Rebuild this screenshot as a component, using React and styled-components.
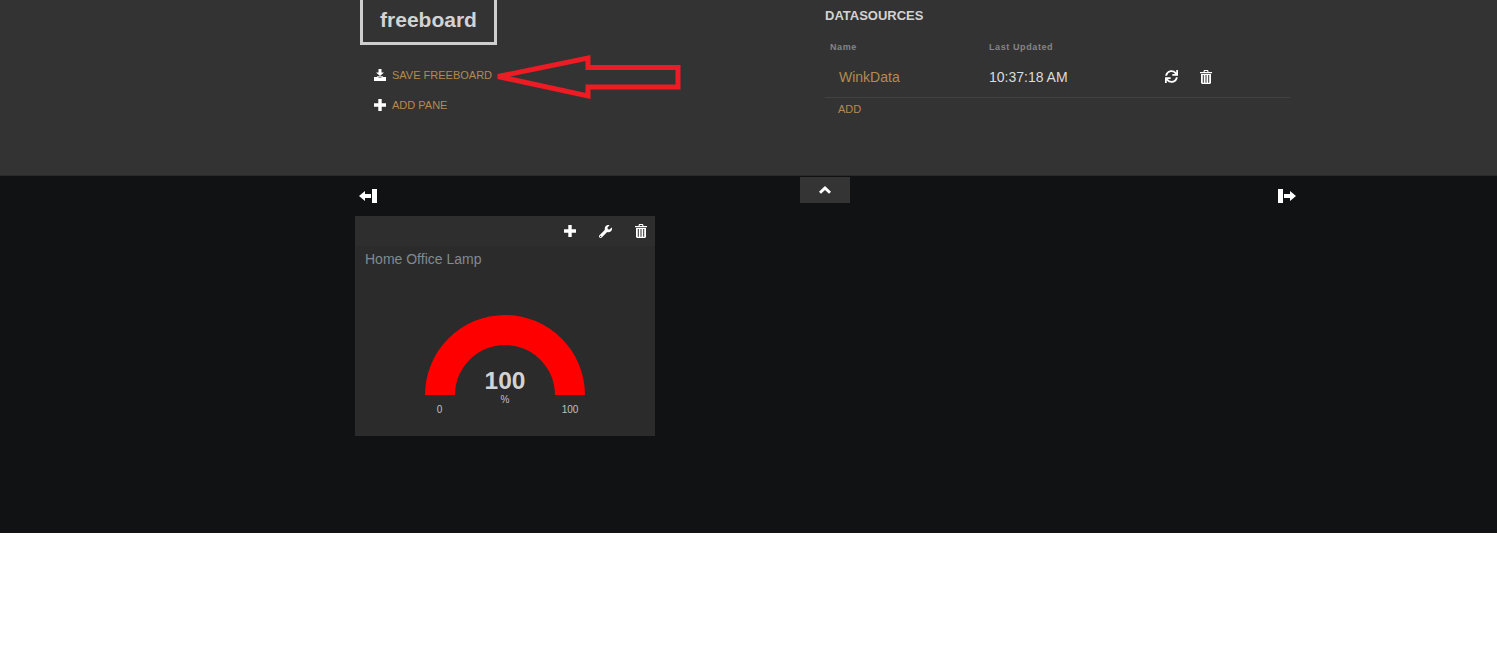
import styled, { createGlobalStyle } from "styled-components";
import { FaSync, FaWrench } from "react-icons/fa";

const GlobalStyle = createGlobalStyle`
  html, body {
    margin: 0;
    padding: 0;
    background: #fff;
    font-family: "Liberation Sans", Arial, sans-serif;
  }
`;

const Page = styled.div`
  width: 1497px;
  height: 533px;
  background: #101214;
  position: relative;
  overflow: hidden;
`;

const Header = styled.header`
  height: 176px;
  box-sizing: border-box;
  padding-left: 355px;
  background: #333333;
  border-bottom: 1px solid #292929;
  display: flex;
`;

const LeftColumn = styled.div`
  width: 470px;
`;

const Logo = styled.h1`
  margin: 0 0 0 5px;
  width: 137px;
  height: 45px;
  box-sizing: border-box;
  border: 3px solid #cfcfcf;
  border-top: none;
  padding-top: 8px;
  text-align: center;
  color: #d3d3d3;
  font-size: 21px;
  line-height: 24px;
  font-weight: bold;
`;

const Actions = styled.ul`
  list-style: none;
  margin: 15px 0 0 19px;
  padding: 0;
`;

const Action = styled.li`
  height: 30px;
  display: flex;
  align-items: center;
  gap: 6px;
  color: #b58a4f;
  font-size: 11px;
  text-transform: uppercase;
`;

const IconSlot = styled.span`
  width: 12px;
  height: 12px;
  display: flex;
  color: #fff;
`;

const RightColumn = styled.div`
  width: 465px;
`;

const SectionTitle = styled.h2`
  margin: 8px 0 0;
  font-size: 13px;
  line-height: 15px;
  font-weight: bold;
  color: #d3d3d3;
  text-transform: uppercase;
`;

const ColumnHeads = styled.div`
  margin-top: 17px;
  height: 14px;
  display: grid;
  grid-template-columns: 159px 1fr;
  padding-left: 5px;
  font-size: 9px;
  line-height: 14px;
  font-weight: bold;
  letter-spacing: 0.6px;
  color: #858585;
`;

const SourceRow = styled.div`
  height: 41px;
  padding-top: 2px;
  display: grid;
  grid-template-columns: 150px 176px 35px 20px;
  align-items: center;
  padding-left: 14px;
  border-bottom: 1px solid #424242;
  font-size: 14px;
`;

const SourceName = styled.span`
  color: #b58a4f;
`;

const SourceTime = styled.span`
  color: #dcdcdc;
`;

const RowIcon = styled.span`
  display: flex;
  color: #fff;
`;

const AddLink = styled.div`
  margin: 5px 0 0 13px;
  font-size: 11px;
  line-height: 13px;
  color: #b58a4f;
`;

const Board = styled.main`
  width: 940px;
  margin-left: 355px;
`;

const Toolbar = styled.div`
  height: 40px;
  display: grid;
  grid-template-columns: 1fr 50px 1fr;
`;

const ToolbarSide = styled.div`
  display: flex;
  align-items: center;
  justify-content: ${(props) => (props.$end ? "flex-end" : "flex-start")};
  padding-left: ${(props) => (props.$end ? "0" : "4px")};
  margin-right: ${(props) => (props.$end ? "-1px" : "0")};
  color: #fff;
`;

const ToggleTab = styled.div`
  height: 26px;
  margin-top: 1px;
  background: #343434;
  display: flex;
  align-items: center;
  justify-content: center;
  color: #fff;
`;

const Pane = styled.section`
  width: 300px;
  height: 220px;
  background: #2b2b2b;
`;

const PaneHeader = styled.div`
  height: 30px;
  background: #2e2e2e;
  display: flex;
  align-items: center;
  justify-content: flex-end;
  gap: 23px;
  padding-right: 8px;
  color: #fff;
`;

const PaneTitle = styled.h3`
  margin: 5px 0 0 10px;
  font-size: 14px;
  line-height: 16px;
  font-weight: normal;
  color: #7f8a93;
`;

const Gauge = styled.svg`
  display: block;
  margin-top: 48px;
`;

const GaugeValue = styled.text`
  font-size: 24.500px;
  font-weight: bold;
  fill: #d3d3d3;
  text-anchor: middle;
`;

const GaugeLabel = styled.text`
  font-size: 10px;
  fill: #c0c0c0;
  text-anchor: middle;
`;

const ArrowNote = styled.svg`
  position: absolute;
  left: 490px;
  top: 50px;
`;

const DownloadIcon = () => (
  <svg width="12" height="12" viewBox="0 0 12 12" fill="currentColor">
    <path d="M4.500 0h3v3.500H10L6 7 2 3.500h2.500z" />
    <path d="M0 8h3.500L6 9l2.500-1H12v4H0z" />
    <rect x="3" y="7.300" width="6" height="1" />
  </svg>
);

const PlusIcon = () => (
  <svg width="12" height="12" viewBox="0 0 12 12" fill="currentColor">
    <path d="M4.300 0h3.400v4.300H12v3.400H7.700V12H4.300V7.700H0V4.300h4.300z" />
  </svg>
);

const TrashIcon = () => (
  <svg width="12" height="14" viewBox="0 0 12 14" fill="currentColor">
    <path d="M4 0h4l.6 2H12v1.200H0V2h3.400zM4.800 1l-.2 1h2.800l-.2-1z" />
    <path d="M1 4h10v9l-1 1H2l-1-1zM2.800 5v7.800h1V5zM5.500 5v7.800h1V5zM8.200 5v7.800h1V5z" fillRule="evenodd" />
  </svg>
);

const ChevronIcon = () => (
  <svg width="12" height="8" viewBox="0 0 12 8" fill="currentColor">
    <path d="M6 0l6 5.800-2 2L6 4 2 7.800l-2-2z" />
  </svg>
);

const CollapseLeftIcon = () => (
  <svg width="18" height="14" viewBox="0 0 18 14" fill="currentColor">
    <path d="M0 7l6-5v3h6v4H6v3z" />
    <rect x="13" y="0" width="5" height="14" />
  </svg>
);

const CollapseRightIcon = () => (
  <svg width="18" height="14" viewBox="0 0 18 14" fill="currentColor">
    <rect x="0" y="0" width="5" height="14" />
    <path d="M18 7l-6-5v3H6v4h6v3z" />
  </svg>
);

const App = () => (
  <>
    <GlobalStyle />
    <Page>
      <Header>
        <LeftColumn>
          <Logo>freeboard</Logo>
          <Actions>
            <Action>
              <IconSlot>
                <DownloadIcon />
              </IconSlot>
              Save Freeboard
            </Action>
            <Action>
              <IconSlot>
                <PlusIcon />
              </IconSlot>
              Add Pane
            </Action>
          </Actions>
        </LeftColumn>
        <RightColumn>
          <SectionTitle>Datasources</SectionTitle>
          <ColumnHeads>
            <span>Name</span>
            <span>Last Updated</span>
          </ColumnHeads>
          <SourceRow>
            <SourceName>WinkData</SourceName>
            <SourceTime>10:37:18 AM</SourceTime>
            <RowIcon>
              <FaSync size={13} />
            </RowIcon>
            <RowIcon>
              <TrashIcon />
            </RowIcon>
          </SourceRow>
          <AddLink>ADD</AddLink>
        </RightColumn>
      </Header>
      <Board>
        <Toolbar>
          <ToolbarSide>
            <CollapseLeftIcon />
          </ToolbarSide>
          <ToggleTab>
            <ChevronIcon />
          </ToggleTab>
          <ToolbarSide $end>
            <CollapseRightIcon />
          </ToolbarSide>
        </Toolbar>
        <Pane>
          <PaneHeader>
            <PlusIcon />
            <FaWrench size={13} />
            <TrashIcon />
          </PaneHeader>
          <PaneTitle>Home Office Lamp</PaneTitle>
          <Gauge width="300" height="125" viewBox="0 0 300 125">
            <path d="M70 80a80 80 0 0 1 160 0h-30a50 50 0 0 0-100 0z" fill="#ff0000" />
            <GaugeValue x="150" y="74">100</GaugeValue>
            <GaugeLabel x="150" y="88">%</GaugeLabel>
            <GaugeLabel x="84.500" y="98">0</GaugeLabel>
            <GaugeLabel x="215" y="98">100</GaugeLabel>
          </Gauge>
        </Pane>
      </Board>
      <ArrowNote width="195" height="55" viewBox="0 0 195 55">
        <path
          d="M8 26.500L98 8v9.500h90V37H98v9z"
          fill="none"
          stroke="#ed1c24"
          strokeWidth="5"
        />
      </ArrowNote>
    </Page>
  </>
);

export default App;
